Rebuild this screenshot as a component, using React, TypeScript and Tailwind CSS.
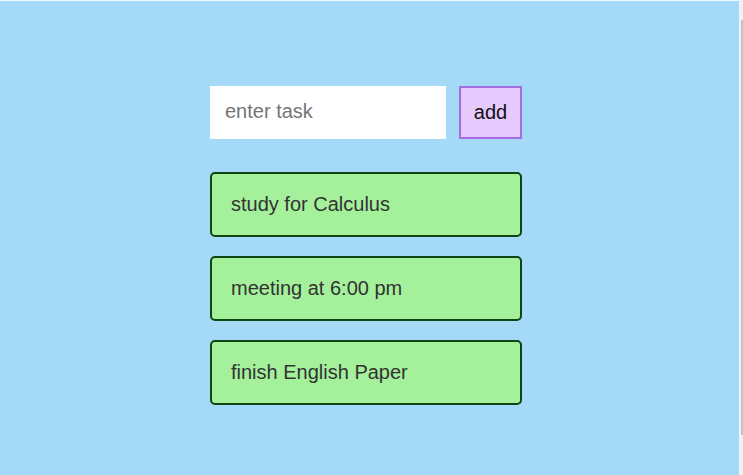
import React from "react";

export default function App() {
  const tasks = ["study for Calculus", "meeting at 6:00 pm", "finish English Paper"];
  return (
    <div className="flex w-[743px] h-[475px] overflow-hidden" style={{ fontFamily: '"Liberation Sans", Arial, sans-serif' }}>
      <div className="flex-1 h-full bg-[#a4daf8] border-t border-[#eef6fb]">
        <div className="flex flex-col items-start pl-[210px] pt-[85px]">
          <div className="flex items-center gap-[13px]">
            <input
              placeholder="enter task"
              className="w-[236px] h-[53px] bg-white px-[15px] pb-[2px] text-[20px] text-[#333] placeholder:text-[#757575] outline-none"
            />
            <button className="w-[63px] h-[53px] bg-[#e6c9fd] border-2 border-[#a56ee0] pb-[2px] text-[20px] text-[#111]">
              add
            </button>
          </div>
          <div className="flex flex-col gap-[19px] mt-[33px]">
            {tasks.map((t) => (
              <div
                key={t}
                className="w-[312px] h-[65px] bg-[#a4f09b] border-2 border-[#0f4510] rounded-[5px] flex items-center pl-[19px] pb-[2px] text-[20px] text-[#333]"
              >
                {t}
              </div>
            ))}
          </div>
        </div>
      </div>
      <div className="w-[4px] h-full bg-[#f1f1f1] flex flex-col pt-[20px]">
        <div className="ml-[2px] w-[2px] h-[415px] bg-[#c1c1c1]" />
      </div>
    </div>
  );
}
